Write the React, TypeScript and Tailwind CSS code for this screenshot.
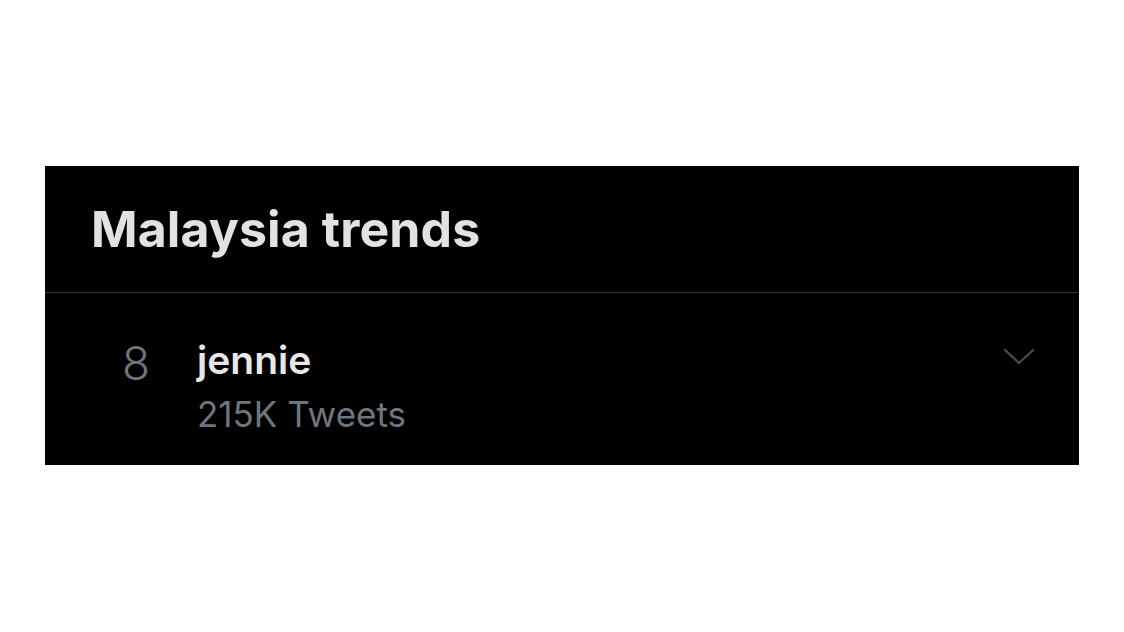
export default function App() {
  return (
    <div className="w-[1124px] h-[632px] bg-white pt-[166px] pl-[45px]" style={{ fontFamily: "Inter, 'Noto Sans', sans-serif" }}>
      <div className="w-[1034px] h-[299px] bg-black flex flex-col">
        <div className="h-[127px] flex items-center pl-[46px] border-b border-[#2f3336]">
          <h2 className="text-[50px] font-bold text-[#e2e2e2] leading-none tracking-[0.1px]">Malaysia trends</h2>
        </div>
        <div className="flex-1 flex items-start pl-[77px] pr-[44px] pt-[47px]">
          <div className="w-[75px] text-[46px] font-light leading-none text-[#6e767d]">8</div>
          <div className="flex-1 flex flex-col">
            <div className="text-[39px] font-semibold text-[#e7e7e7] leading-none">jennie</div>
            <div className="text-[35px] text-[#6e767d] leading-none mt-[18px]">215K Tweets</div>
          </div>
          <svg width="32" height="18" viewBox="0 0 32 18" className="mt-[8px]" fill="none" stroke="#4a4d50" strokeWidth="2.2" strokeLinecap="round" strokeLinejoin="round">
            <path d="M2 2 L16 15 L30 2" />
          </svg>
        </div>
      </div>
    </div>
  );
}
